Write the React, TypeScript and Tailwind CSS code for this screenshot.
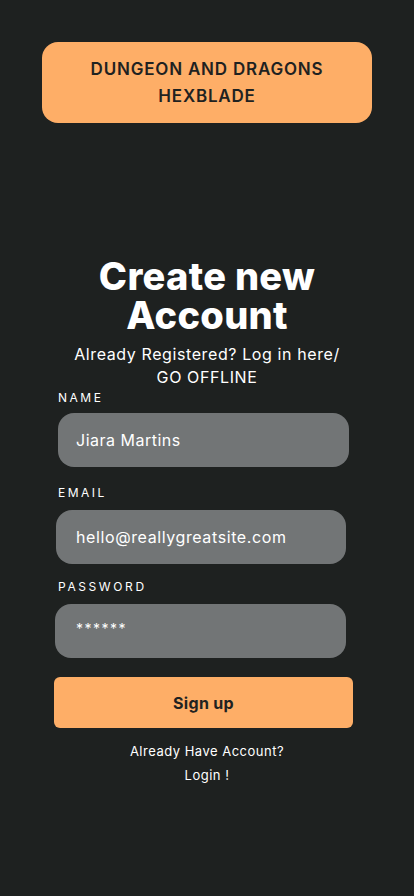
export default function App() {
  return (
    <div className="min-h-[896px] w-full bg-[#1e2120] font-['Inter','Noto_Sans',sans-serif] text-white">
      <div className="flex flex-col pt-[42px]">
        <div className="mx-[42px] flex h-[81px] w-[330px] flex-col items-center justify-center rounded-[16px] bg-[#feae67] text-[17px] font-semibold leading-[27px] tracking-[0.8px] text-[#1f2221]">
          <span>DUNGEON AND DRAGONS</span>
          <span>HEXBLADE</span>
        </div>

        <h1 className="mt-[134px] text-center text-[38px] font-extrabold leading-[39px] tracking-[0.3px]">
          Create new
          <br />
          Account
        </h1>
        <p className="mt-[8px] text-center text-[16px] leading-[23px] tracking-[0.6px]">
          Already Registered? Log in here/
          <br />
          GO OFFLINE
        </p>

        <label className="ml-[58px] mt-[1px] text-[12px] leading-[16px] tracking-[2.5px]">NAME</label>
        <div className="ml-[58px] mt-[7px] flex h-[54px] w-[291px] items-center rounded-[16px] bg-[#727576] px-[18px] text-[16px] tracking-[0.5px]">
          Jiara Martins
        </div>

        <label className="ml-[58px] mt-[18px] text-[12px] leading-[16px] tracking-[2.5px]">EMAIL</label>
        <div className="ml-[56px] mt-[9px] flex h-[54px] w-[290px] items-center rounded-[16px] bg-[#727576] px-[20px] text-[16px] tracking-[0.6px]">
          hello@reallygreatsite.com
        </div>

        <label className="ml-[58px] mt-[15px] text-[12px] leading-[16px] tracking-[2.6px]">PASSWORD</label>
        <div className="ml-[55px] mt-[9px] flex h-[54px] w-[291px] items-start rounded-[16px] bg-[#727576] px-[21px] pt-[14px] text-[14px] tracking-[1.5px]">
          ******
        </div>

        <button className="ml-[54px] mt-[19px] h-[51px] w-[299px] rounded-[6px] bg-[#feae67] text-[16px] font-bold tracking-[0.3px] text-[#1f2221]">
          Sign up
        </button>

        <p className="mt-[11px] text-center text-[13px] leading-[24px] tracking-[0.5px]">
          Already Have Account?
          <br />
          Login !
        </p>
      </div>
    </div>
  );
}
